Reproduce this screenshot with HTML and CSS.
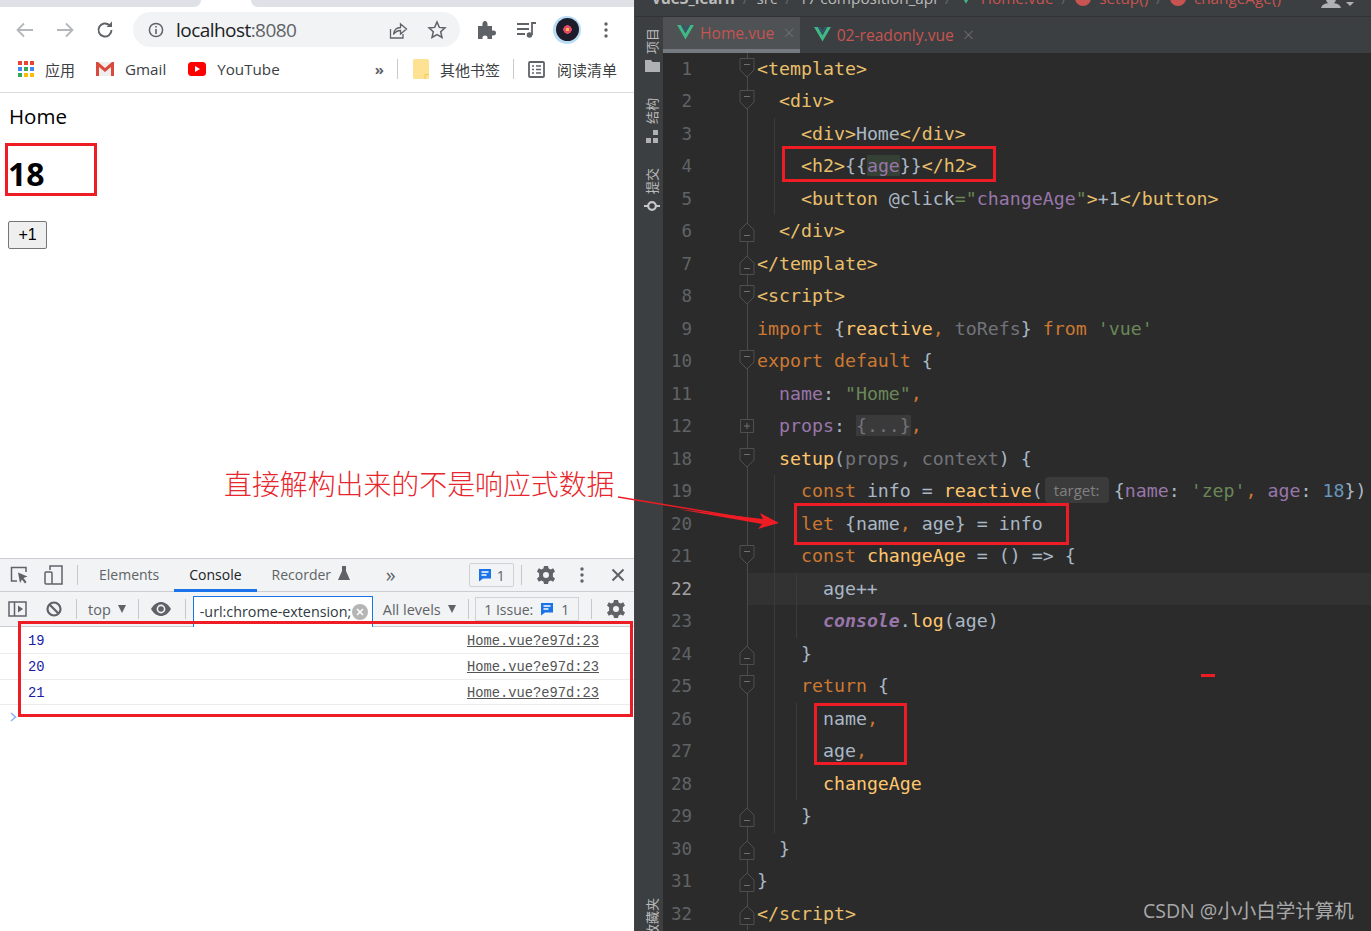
FILE: index.html
```html
<!DOCTYPE html>
<html lang="en">
<head>
    <meta charset="UTF-8">
    <title>Home</title>
    <link rel="stylesheet" href="styles.css">
</head>
<body>
    <svg class="defs" width="0" height="0">
        <symbol id="fold-open" viewBox="0 0 16 24"><path d="M1 1.5H15V13L8 20L1 13Z" fill="#2b2b2b" stroke="#4f4f4f"/><path d="M5 7.5H11" stroke="#707070"/></symbol>
        <symbol id="fold-close" viewBox="0 0 16 24"><path d="M1 22.5H15V11L8 4L1 11Z" fill="#2b2b2b" stroke="#4f4f4f"/><path d="M5 16.5H11" stroke="#707070"/></symbol>
        <symbol id="fold-plus" viewBox="0 0 16 24"><path d="M1.5 5.5H14.5V18.5H1.5Z" fill="#2b2b2b" stroke="#4f4f4f"/><path d="M5 12H11M8 9V15" stroke="#707070"/></symbol>
        <symbol id="vue" viewBox="0 0 18 16"><path d="M0 0H4L9 9L14 0H18L9 15.5Z" fill="#41b883"/><path d="M4 0H7L9 4L11 0H14L9 8.5Z" fill="#35566a"/></symbol>
        <symbol id="msg" viewBox="0 0 14 14"><path d="M1 1H13V10.5H5L1 13.5Z" fill="#1a73e8"/><path d="M3.5 4H10.5M3.5 7H8.5" stroke="#fff" stroke-width="1.3"/></symbol>
        <symbol id="gear" viewBox="0 0 20 20"><path d="M8 1H12L12.6 3.6L14.8 4.6L17.2 3.2L19 6.6L16.9 8.3V11.7L19 13.4L17.2 16.8L14.8 15.4L12.6 16.4L12 19H8L7.4 16.4L5.2 15.4L2.8 16.8L1 13.4L3.1 11.7V8.3L1 6.6L2.8 3.2L5.2 4.6L7.4 3.6Z" fill="#5f6368"/><circle cx="10" cy="10" r="3" fill="#f1f3f4"/></symbol>
    </svg>

    <div class="screen">
        <!-- left: chrome window -->
        <div class="browser">
            <div class="tabstrip"><div class="tab-left"></div><div class="tab-right"></div></div>
            <div class="toolbar">
                <svg class="tb-icon" width="20" height="20" viewBox="0 0 20 20"><path d="M18 10H3M9 3.5L2.5 10L9 16.5" fill="none" stroke="#b4b7bb" stroke-width="1.8"/></svg>
                <svg class="tb-icon" width="20" height="20" viewBox="0 0 20 20"><path d="M2 10H17M11 3.5L17.5 10L11 16.5" fill="none" stroke="#b4b7bb" stroke-width="1.8"/></svg>
                <svg class="tb-icon" width="20" height="20" viewBox="0 0 20 20"><path d="M16.5 10A6.5 6.5 0 1 1 14.5 5.3" fill="none" stroke="#5f6368" stroke-width="1.9"/><path d="M11.5 7H17V1.5Z" fill="#5f6368"/></svg>
                <div class="omnibox">
                    <svg width="16" height="16" viewBox="0 0 16 16"><circle cx="8" cy="8" r="6.6" fill="none" stroke="#5f6368" stroke-width="1.5"/><path d="M8 7V12M8 4V5.6" stroke="#5f6368" stroke-width="1.6"/></svg>
                    <span class="url">localhost<span class="url-dim">:8080</span></span>
                    <svg class="share" width="20" height="20" viewBox="0 0 20 20"><path d="M2.5 9V18H15V14" fill="none" stroke="#5f6368" stroke-width="1.3"/><path d="M5.5 14.5C6 10 9 7.5 12.5 7.5V4L18.5 9L12.5 14V10.5C10 10.5 7.5 11.5 5.5 14.5Z" fill="none" stroke="#5f6368" stroke-width="1.3"/></svg>
                    <svg width="20" height="20" viewBox="0 0 20 20"><path d="M10 2L12.3 7.4L18 7.9L13.7 11.7L15 17.5L10 14.5L5 17.5L6.3 11.7L2 7.9L7.7 7.4Z" fill="none" stroke="#5f6368" stroke-width="1.5"/></svg>
                </div>
                <svg class="puzzle" width="20" height="20" viewBox="0 0 20 20"><path d="M2 6H6.5C6 2.5 7.5 1 9 1S12 2.5 11.5 6H16V10.5C19.5 10 20 11.5 20 13S19 16 16 15.5V19H11.5C12 16.5 10.5 15.5 9 15.5S6 16.5 6.5 19H2Z" fill="#5f6368"/></svg>
                <svg class="queue" width="20" height="18" viewBox="0 0 20 18"><path d="M0 3H12M0 8H12M0 13H8" stroke="#5f6368" stroke-width="1.8"/><path d="M15 14V2H19" fill="none" stroke="#5f6368" stroke-width="1.8"/><circle cx="12.5" cy="14" r="2.8" fill="#5f6368"/></svg>
                <div class="avatar"><div class="avatar-disc"></div></div>
                <svg class="menu" width="4" height="16" viewBox="0 0 4 16"><circle cx="2" cy="2" r="1.7" fill="#5f6368"/><circle cx="2" cy="8" r="1.7" fill="#5f6368"/><circle cx="2" cy="14" r="1.7" fill="#5f6368"/></svg>
            </div>
            <div class="bookmarks">
                <div class="bm bm-apps">
                    <svg width="16" height="16" viewBox="0 0 16 16"><path d="M0 0H4V4H0Z" fill="#ea4335"/><path d="M6 0H10V4H6Z" fill="#ea4335"/><path d="M12 0H16V4H12Z" fill="#ea4335"/><path d="M0 6H4V10H0Z" fill="#4285f4"/><path d="M6 6H10V10H6Z" fill="#34a853"/><path d="M12 6H16V10H12Z" fill="#4285f4"/><path d="M0 12H4V16H0Z" fill="#34a853"/><path d="M6 12H10V16H6Z" fill="#fbbc05"/><path d="M12 12H16V16H12Z" fill="#fbbc05"/></svg>
                    <span>应用</span>
                </div>
                <div class="bm bm-gmail">
                    <svg width="18" height="14" viewBox="0 0 18 14"><path d="M0 0H18V14H0Z" fill="#eee"/><path d="M0 14V0H2L9 6L16 0H18V14H15V5L9 10L3 5V14Z" fill="#d9493c"/></svg>
                    <span>Gmail</span>
                </div>
                <div class="bm bm-yt">
                    <svg width="18" height="14" viewBox="0 0 18 14"><rect width="18" height="14" rx="3.5" fill="#f00"/><path d="M7 4L12 7L7 10Z" fill="#fff"/></svg>
                    <span>YouTube</span>
                </div>
                <span class="bm-more">»</span>
                <div class="bm-sep"></div>
                <div class="bm bm-other">
                    <svg width="16" height="20" viewBox="0 0 16 20"><path d="M1.5 0H14.5Q16 0 16 1.5V18.5Q16 20 14.5 20H1.5Q0 20 0 18.5V1.5Q0 0 1.5 0Z" fill="#fde293"/><path d="M12 20V15.5H16" fill="none" stroke="#f1c94f"/></svg>
                    <span>其他书签</span>
                </div>
                <div class="bm-sep"></div>
                <div class="bm bm-read">
                    <svg width="17" height="17" viewBox="0 0 17 17"><rect x="1" y="1" width="15" height="15" rx="1" fill="none" stroke="#5f6368" stroke-width="1.8"/><path d="M4 5H6M8 5H13M4 8.5H6M8 8.5H13M4 12H6M8 12H13" stroke="#5f6368" stroke-width="1.3"/></svg>
                    <span>阅读清单</span>
                </div>
            </div>
            <div class="page">
                <div class="page-home">Home</div>
                <h2 class="page-age">18</h2>
                <button class="page-btn">+1</button>
            </div>
            <div class="devtools">
                <div class="dt-tabs">
                    <svg class="dt-inspect" width="19" height="18" viewBox="0 0 19 18"><path d="M7 15H1.5V1.5H16V6" fill="none" stroke="#5f6368" stroke-width="1.5"/><path d="M8 6.5L17.5 10.5L13.5 12L16.5 16L15 17.5L12 13.5L10 17Z" fill="#5f6368"/></svg>
                    <svg class="dt-device" width="19" height="20" viewBox="0 0 19 20"><path d="M6 5V1H18V19H8" fill="none" stroke="#5f6368" stroke-width="1.5"/><rect x="1" y="7" width="7" height="12" rx="1" fill="none" stroke="#5f6368" stroke-width="1.5"/></svg>
                    <div class="dt-sep dt-sep-a"></div>
                    <div class="dt-tab">Elements</div>
                    <div class="dt-tab dt-tab-on">Console</div>
                    <div class="dt-tab dt-tab-rec">Recorder
                        <svg width="12" height="14" viewBox="0 0 12 14"><path d="M4 0H8V5L12 14H0L4 5Z" fill="#5f6368"/></svg>
                    </div>
                    <span class="dt-more">»</span>
                    <div class="dt-badge"><svg width="14" height="14"><use href="#msg"/></svg><span>1</span></div>
                    <div class="dt-sep dt-sep-b"></div>
                    <svg class="dt-gear" width="20" height="20"><use href="#gear"/></svg>
                    <svg class="dt-dots" width="4" height="16" viewBox="0 0 4 16"><circle cx="2" cy="2" r="1.7" fill="#5f6368"/><circle cx="2" cy="8" r="1.7" fill="#5f6368"/><circle cx="2" cy="14" r="1.7" fill="#5f6368"/></svg>
                    <svg class="dt-x" width="14" height="14" viewBox="0 0 14 14"><path d="M1.5 1.5L12.5 12.5M12.5 1.5L1.5 12.5" stroke="#5f6368" stroke-width="2"/></svg>
                </div>
                <div class="dt-filter">
                    <svg class="f-panel" width="19" height="16" viewBox="0 0 19 16"><rect x="1" y="1" width="17" height="14" fill="none" stroke="#5f6368" stroke-width="1.5"/><path d="M6.5 1V15" stroke="#5f6368" stroke-width="1.5"/><path d="M10 4.5L15 8L10 11.5Z" fill="#5f6368"/></svg>
                    <svg class="f-block" width="16" height="16" viewBox="0 0 16 16"><circle cx="8" cy="8" r="6.5" fill="none" stroke="#5f6368" stroke-width="2.2"/><path d="M3.5 3.5L12.5 12.5" stroke="#5f6368" stroke-width="2.2"/></svg>
                    <div class="dt-sep f-sep-a"></div>
                    <span class="f-top">top</span><span class="f-caret f-caret-top"></span>
                    <div class="dt-sep f-sep-b"></div>
                    <svg class="f-eye" width="20" height="14" viewBox="0 0 20 14"><path d="M0 7C3 2 6.5 0 10 0S17 2 20 7C17 12 13.5 14 10 14S3 12 0 7Z" fill="#5f6368"/><circle cx="10" cy="7" r="4.4" fill="#f1f3f4"/><circle cx="10" cy="7" r="2.8" fill="#5f6368"/></svg>
                    <div class="dt-sep f-sep-c"></div>
                    <div class="f-input">
                        <span>-url:chrome-extension;</span>
                        <svg width="16" height="16" viewBox="0 0 16 16"><circle cx="8" cy="8" r="8" fill="#b5b5b5"/><path d="M5 5L11 11M11 5L5 11" stroke="#fff" stroke-width="1.5"/></svg>
                    </div>
                    <span class="f-levels">All levels</span><span class="f-caret"></span>
                    <div class="dt-sep f-sep-d"></div>
                    <div class="f-issue"><span>1 Issue:</span><svg width="14" height="14"><use href="#msg"/></svg><span>1</span></div>
                    <div class="dt-sep f-sep-e"></div>
                    <svg class="f-gear" width="20" height="20"><use href="#gear"/></svg>
                </div>
                <div class="log-row log-first"><span class="log-val">19</span><a class="log-src">Home.vue?e97d:23</a></div>
                <div class="log-row"><span class="log-val">20</span><a class="log-src">Home.vue?e97d:23</a></div>
                <div class="log-row"><span class="log-val">21</span><a class="log-src">Home.vue?e97d:23</a></div>
                <svg class="prompt" width="7" height="10" viewBox="0 0 7 10"><path d="M1 1L5.5 5L1 9" fill="none" stroke="#8ab4f8" stroke-width="1.6"/></svg>
            </div>
        </div>

        <!-- right: ide window -->
        <div class="ide">
            <div class="crumbs">
                <div class="crumbs-inner">
                    <b>vue3_learn</b><i>/</i><span>src</span><i>/</i><span>17 composition_api</span><i>/</i>
                    <svg width="14" height="12"><use href="#vue"/></svg><span class="crumb-red">Home.vue</span><i>/</i>
                    <span class="crumb-dot"></span><span class="crumb-red">setup()</span><i>/</i>
                    <span class="crumb-dot"></span><span class="crumb-red">changeAge()</span>
                </div>
                <svg class="crumb-user" width="34" height="8" viewBox="0 0 34 8"><circle cx="10" cy="-1" r="5" fill="#afb1b3"/><path d="M0 8C1 4 5 3 10 3S19 4 20 8Z" fill="#afb1b3"/><path d="M25 2L29 6L33 2Z" fill="#afb1b3"/></svg>
            </div>
            <div class="ide-main">
                <div class="side">
                    <span class="side-label side-project">项目</span>
                    <svg class="side-icon" width="15" height="12" viewBox="0 0 15 12"><path d="M0 0H6L7.5 2H15V12H0Z" fill="#afb1b3"/></svg>
                    <span class="side-label side-structure">结构</span>
                    <svg class="side-icon" width="14" height="13" viewBox="0 0 14 13"><path d="M8 0H13V5H8ZM1 8H6V13H1ZM8 8H13V13H8Z" fill="#afb1b3"/></svg>
                    <span class="side-label side-commit">提交</span>
                    <svg class="side-icon" width="16" height="12" viewBox="0 0 16 12"><circle cx="8" cy="6" r="3.8" fill="none" stroke="#c5c7c9" stroke-width="2.2"/><path d="M0 6H4M12 6H16" stroke="#c5c7c9" stroke-width="2.2"/></svg>
                    <span class="side-label side-fav">收藏夹</span>
                </div>
                <div class="editor">
                    <div class="file-tabs">
                        <div class="file-tab file-tab-on"><svg width="17" height="15"><use href="#vue"/></svg><span>Home.vue</span><em>×</em></div>
                        <div class="file-tab"><svg width="17" height="15"><use href="#vue"/></svg><span>02-readonly.vue</span><em>×</em></div>
                    </div>
                    <div class="code">
                        <div class="row"><span class="ln">1</span><span class="fold"><svg><use href="#fold-open"/></svg></span><span class="src"><span class="t">&lt;template&gt;</span></span></div>
                        <div class="row"><span class="ln">2</span><span class="fold"><svg><use href="#fold-open"/></svg></span><span class="src">  <span class="t">&lt;div&gt;</span></span></div>
                        <div class="row"><span class="ln">3</span><span class="fold"></span><span class="src g1">    <span class="t">&lt;div&gt;</span>Home<span class="t">&lt;/div&gt;</span></span></div>
                        <div class="row"><span class="ln">4</span><span class="fold"></span><span class="src g1">    <span class="t">&lt;h2&gt;</span>{{<span class="v hl">age</span>}}<span class="t">&lt;/h2&gt;</span></span></div>
                        <div class="row"><span class="ln">5</span><span class="fold"></span><span class="src g1">    <span class="t">&lt;button</span> @click<span class="s">=</span><span class="s">"</span><span class="v">changeAge</span><span class="s">"</span><span class="t">&gt;</span>+1<span class="t">&lt;/button&gt;</span></span></div>
                        <div class="row"><span class="ln">6</span><span class="fold"><svg><use href="#fold-close"/></svg></span><span class="src">  <span class="t">&lt;/div&gt;</span></span></div>
                        <div class="row"><span class="ln">7</span><span class="fold"><svg><use href="#fold-close"/></svg></span><span class="src"><span class="t">&lt;/template&gt;</span></span></div>
                        <div class="row"><span class="ln">8</span><span class="fold"><svg><use href="#fold-open"/></svg></span><span class="src"><span class="t">&lt;script&gt;</span></span></div>
                        <div class="row"><span class="ln">9</span><span class="fold"></span><span class="src"><span class="k">import</span> {<span class="f">reactive</span><span class="k">,</span> <span class="p">toRefs</span>} <span class="k">from</span> <span class="s">'vue'</span></span></div>
                        <div class="row"><span class="ln">10</span><span class="fold"><svg><use href="#fold-open"/></svg></span><span class="src"><span class="k">export default</span> {</span></div>
                        <div class="row"><span class="ln">11</span><span class="fold"></span><span class="src">  <span class="v">name</span>: <span class="s">"Home"</span><span class="k">,</span></span></div>
                        <div class="row"><span class="ln">12</span><span class="fold"><svg><use href="#fold-plus"/></svg></span><span class="src">  <span class="v">props</span>: <span class="folded">{...}</span><span class="k">,</span></span></div>
                        <div class="row"><span class="ln">18</span><span class="fold"><svg><use href="#fold-open"/></svg></span><span class="src">  <span class="f">setup</span>(<span class="p">props, context</span>) {</span></div>
                        <div class="row"><span class="ln">19</span><span class="fold"></span><span class="src g1">    <span class="k">const</span> info = <span class="f">reactive</span>(<span class="inlay">target:</span>{<span class="v">name</span>: <span class="s">'zep'</span><span class="k">,</span> <span class="v">age</span>: <span class="n">18</span>})</span></div>
                        <div class="row"><span class="ln">20</span><span class="fold"></span><span class="src g1">    <span class="k">let</span> {name<span class="k">,</span> age} = info</span></div>
                        <div class="row"><span class="ln">21</span><span class="fold"><svg><use href="#fold-open"/></svg></span><span class="src g1">    <span class="k">const</span> <span class="f">changeAge</span> = () =&gt; {</span></div>
                        <div class="row row-current"><span class="ln">22</span><span class="fold"></span><span class="src g2">      age++</span></div>
                        <div class="row"><span class="ln">23</span><span class="fold"></span><span class="src g2">      <span class="v console">console</span>.<span class="f">log</span>(age)</span></div>
                        <div class="row"><span class="ln">24</span><span class="fold"><svg><use href="#fold-close"/></svg></span><span class="src g1">    }</span></div>
                        <div class="row"><span class="ln">25</span><span class="fold"><svg><use href="#fold-open"/></svg></span><span class="src g1">    <span class="k">return</span> {</span></div>
                        <div class="row"><span class="ln">26</span><span class="fold"></span><span class="src g2">      name<span class="k">,</span></span></div>
                        <div class="row"><span class="ln">27</span><span class="fold"></span><span class="src g2">      age<span class="k">,</span></span></div>
                        <div class="row"><span class="ln">28</span><span class="fold"></span><span class="src g2">      <span class="f">changeAge</span></span></div>
                        <div class="row"><span class="ln">29</span><span class="fold"><svg><use href="#fold-close"/></svg></span><span class="src g1">    }</span></div>
                        <div class="row"><span class="ln">30</span><span class="fold"><svg><use href="#fold-close"/></svg></span><span class="src">  }</span></div>
                        <div class="row"><span class="ln">31</span><span class="fold"><svg><use href="#fold-close"/></svg></span><span class="src">}</span></div>
                        <div class="row"><span class="ln">32</span><span class="fold"><svg><use href="#fold-close"/></svg></span><span class="src"><span class="t">&lt;/script&gt;</span></span></div>
                    </div>
                </div>
            </div>
        </div>

        <!-- annotations drawn on top of the screenshot -->
        <div class="mark mark-age"></div>
        <div class="mark mark-console"></div>
        <div class="mark mark-h2"></div>
        <div class="mark mark-let"></div>
        <div class="mark mark-return"></div>
        <div class="mark-dash"></div>
        <div class="note">直接解构出来的不是响应式数据</div>
        <svg class="arrow" width="170" height="36" viewBox="0 0 170 36"><path d="M1 1L146 25" stroke="#ee1c25" stroke-width="1.4"/><path d="M60 13L146 23L143 17L162 27L141 33L145 28Z" fill="#ee1c25"/></svg>
        <div class="watermark">CSDN @小小白学计算机</div>
    </div>
</body>
</html>
```

FILE: styles.css
```css
* {
    box-sizing: border-box;
}
html, body {
    margin: 0;
    height: 931px;
    overflow: hidden;
}
.defs {
    position: absolute;
}
.screen {
    position: relative;
    display: flex;
    width: 1371px;
    height: 931px;
    font-family: "Open Sans", "Noto Sans CJK SC", sans-serif;
}

/* browser */
.browser {
    width: 635px;
    height: 931px;
    display: flex;
    flex-direction: column;
    background-color: #fff;
    border-right: 1px solid #444;
    flex-shrink: 0;
}
.tabstrip {
    height: 7px;
    display: flex;
    justify-content: space-between;
    flex-shrink: 0;
}
.tab-left {
    width: 201px;
    background-color: #dee1e6;
    border-radius: 0 0 7px 0;
}
.tab-right {
    width: 383px;
    background-color: #dee1e6;
    border-radius: 0 0 0 7px;
}
.toolbar {
    height: 45px;
    display: flex;
    align-items: center;
    flex-shrink: 0;
}
.tb-icon {
    margin-left: 15px;
    margin-right: -4px;
}
.tb-icon + .tb-icon {
    margin-left: 24px;
}
.omnibox {
    width: 327px;
    height: 35px;
    margin-left: 22px;
    padding: 0 13px 0 15px;
    border-radius: 18px;
    background-color: #f1f3f4;
    display: flex;
    align-items: center;
}
.url {
    margin-left: 12px;
    font-size: 19px;
    letter-spacing: -0.55px;
    color: #202124;
    flex: 1;
}
.url-dim {
    color: #5f6368;
}
.share {
    margin-right: 19px;
}
.puzzle {
    margin-left: 16px;
}
.queue {
    margin-left: 21px;
}
.avatar {
    width: 28px;
    height: 28px;
    margin-left: 16px;
    border-radius: 50%;
    background-color: #b9dcf5;
    display: flex;
    align-items: center;
    justify-content: center;
}
.avatar-disc {
    width: 23px;
    height: 23px;
    border-radius: 50%;
    background: radial-gradient(circle, #f5c04a 0 1.5px, #e8476a 2px 4px, #1c1c2a 4.5px 100%);
}
.menu {
    margin-left: 23px;
}
.bookmarks {
    height: 41px;
    padding: 0 0 6px 18px;
    display: flex;
    align-items: center;
    border-bottom: 1px solid #dadce0;
    flex-shrink: 0;
    font-size: 15.2px;
    color: #3c4043;
}
.bm {
    display: flex;
    align-items: center;
    gap: 11px;
}
.bm-apps span, .bm-other span, .bm-read span {
    font-size: 15px;
}
.bm-gmail {
    margin-left: 21px;
}
.bm-yt {
    margin-left: 22px;
}
.bm-more {
    margin-left: auto;
    margin-right: 13px;
    font-size: 15px;
    color: #5f6368;
    font-weight: bold;
}
.bm-sep {
    width: 1px;
    height: 20px;
    background-color: #c8cacd;
}
.bm-other {
    margin: 0 13px 0 15px;
}
.bm-read {
    margin: 0 17px 0 14px;
    gap: 12px;
}
.page {
    flex: 1;
    padding: 9px 0 0 8px;
    color: #000;
}
.page-home {
    height: 28px;
    margin-left: 1px;
    font-size: 20.5px;
    line-height: 28px;
}
.page-age {
    margin: 26px 0 29px 0;
    height: 36px;
    font-size: 32px;
    line-height: 36px;
    font-weight: bold;
}
.page-btn {
    display: block;
    width: 39px;
    height: 28px;
    padding: 0;
    font-family: "Liberation Sans", sans-serif;
    font-size: 16px;
    background-color: #efefef;
    border: 1px solid #767676;
    border-radius: 2px;
}

/* devtools */
.devtools {
    height: 373px;
    flex-shrink: 0;
    border-top: 1px solid #cbcdd0;
    position: relative;
}
.dt-tabs {
    height: 33px;
    display: flex;
    align-items: center;
    background-color: #f1f3f4;
    border-bottom: 1px solid #cbcdd0;
    font-size: 14px;
    color: #5f6368;
}
.dt-inspect {
    margin-left: 10px;
}
.dt-device {
    margin-left: 15px;
}
.dt-sep {
    width: 1px;
    height: 20px;
    background-color: #c6c8cb;
    flex-shrink: 0;
}
.dt-sep-a {
    margin-left: 14px;
}
.dt-tab {
    height: 33px;
    padding: 0 15px;
    line-height: 32px;
}
.dt-sep-a + .dt-tab {
    margin-left: 6px;
}
.dt-tab-on {
    color: #202124;
    border-bottom: 3px solid #1a73e8;
}
.dt-tab-rec svg {
    margin-left: 3px;
}
.dt-more {
    margin-left: 21px;
    font-size: 20px;
    line-height: 24px;
    color: #5f6368;
}
.dt-badge {
    width: 45px;
    height: 24px;
    margin-left: 73px;
    display: flex;
    align-items: center;
    justify-content: center;
    gap: 5px;
    border: 1px solid #cfd1d4;
    border-radius: 2px;
}
.dt-sep-b {
    margin-left: 7px;
}
.dt-gear {
    margin-left: 14px;
}
.dt-dots {
    margin-left: 24px;
}
.dt-x {
    margin-left: 27px;
}
.dt-filter {
    height: 35px;
    display: flex;
    align-items: center;
    background-color: #f1f3f4;
    border-bottom: 1px solid #cbcdd0;
    font-size: 14.5px;
    color: #5f6368;
}
.f-panel {
    margin-left: 8px;
}
.f-block {
    margin-left: 19px;
}
.f-sep-a {
    margin-left: 14px;
}
.f-top {
    margin-left: 11px;
}
.f-caret {
    width: 0;
    height: 0;
    margin-left: 7px;
    border-left: 4.5px solid transparent;
    border-right: 4.5px solid transparent;
    border-top: 8px solid #5f6368;
}
.f-sep-b {
    margin-left: 12px;
}
.f-eye {
    margin-left: 12px;
}
.f-sep-c {
    margin-left: 14px;
}
.f-input {
    width: 180px;
    height: 31px;
    margin: 4px 0 0 7px;
    padding: 0 4px 0 6px;
    display: flex;
    align-items: center;
    justify-content: space-between;
    background-color: #fff;
    border: 1px solid #1a73e8;
    border-bottom: none;
    color: #303942;
    font-size: 14.3px;
    white-space: nowrap;
    overflow: hidden;
}
.f-levels {
    margin-left: 10px;
}
.f-sep-d {
    margin-left: 12px;
}
.f-issue {
    width: 104px;
    height: 24px;
    margin-left: 6px;
    display: flex;
    align-items: center;
    justify-content: center;
    gap: 7px;
    border: 1px solid #cfd1d4;
    font-size: 14px;
}
.f-sep-e {
    margin-left: 12px;
}
.f-gear {
    margin-left: 14px;
}
.log-row {
    height: 25.5px;
    padding: 3px 35px 0 28px;
    display: flex;
    align-items: center;
    justify-content: space-between;
    border-bottom: 1px solid #ececec;
    font-family: "Liberation Mono", monospace;
    font-size: 13.75px;
}
.log-first {
    height: 27px;
}
.log-val {
    color: #1a1aa6;
}
.log-src {
    color: #545454;
    text-decoration: underline;
}
.prompt {
    display: block;
    margin: 7px 0 0 10px;
}

/* ide */
.ide {
    flex: 1;
    min-width: 0;
    display: flex;
    flex-direction: column;
    background-color: #2b2b2b;
}
.crumbs {
    height: 17px;
    display: flex;
    justify-content: space-between;
    background-color: #3c3f41;
    border-bottom: 1px solid #323232;
    overflow: hidden;
    flex-shrink: 0;
}
.crumbs-inner {
    height: 24px;
    margin: -14px 0 0 17px;
    display: flex;
    align-items: center;
    gap: 8px;
    font-size: 15.3px;
    color: #bbb;
    white-space: nowrap;
}
.crumbs-inner i {
    color: #666;
    font-style: normal;
}
.crumb-red {
    color: #c75450;
}
.crumb-dot {
    width: 16px;
    height: 16px;
    border-radius: 50%;
    background-color: #c75450;
}
.crumb-user {
    margin-right: 16px;
}
.ide-main {
    flex: 1;
    display: flex;
    min-height: 0;
}
.side {
    width: 28px;
    padding-left: 6px;
    background-color: #3c3f41;
    display: flex;
    flex-direction: column;
    align-items: center;
    flex-shrink: 0;
    overflow: hidden;
}
.side-label {
    writing-mode: vertical-rl;
    text-orientation: sideways;
    transform: rotate(180deg);
    font-family: "Noto Sans CJK SC", sans-serif;
    font-size: 13px;
    line-height: 16px;
    color: #bbb;
    flex-shrink: 0;
}
.side-icon {
    margin-top: 6px;
    flex-shrink: 0;
}
.side-project {
    margin-top: 11px;
}
.side-structure {
    margin-top: 26px;
}
.side-commit {
    margin-top: 25px;
}
.side-fav {
    margin-top: auto;
    margin-bottom: -6px;
}
.editor {
    flex: 1;
    min-width: 0;
    display: flex;
    flex-direction: column;
}
.file-tabs {
    height: 35.5px;
    display: flex;
    background-color: #3c3f41;
    flex-shrink: 0;
}
.file-tab {
    height: 35.5px;
    padding: 0 10px 0 14px;
    display: flex;
    align-items: center;
    gap: 6px;
    font-family: "Open Sans", sans-serif;
    font-size: 15.6px;
    color: #c75450;
}
.file-tab em {
    margin-left: 3px;
    font-style: normal;
    font-size: 20px;
    font-weight: 300;
    color: #6e7072;
}
.file-tab-on {
    background-color: #4e5254;
    border-bottom: 4px solid #747a80;
    padding-right: 5px;
}

/* code */
.code {
    flex: 1;
    font-family: "DejaVu Sans Mono", monospace;
    font-size: 18.25px;
    color: #a9b7c6;
}
.row {
    display: flex;
    height: 32.5px;
    line-height: 32.5px;
    white-space: pre;
}
.ln {
    width: 29px;
    text-align: right;
    color: #606366;
    flex-shrink: 0;
    font-size: 17.5px;
}
.fold {
    width: 65px;
    flex-shrink: 0;
    display: flex;
    align-items: center;
    padding-left: 48px;
    background: linear-gradient(#4a4a4a, #4a4a4a) 55px 0 / 1px 100% no-repeat;
}
.fold svg {
    width: 16px;
    height: 24px;
    margin-left: -1px;
}
.src {
    flex: 1;
    min-width: 0;
}
.g1 {
    background: linear-gradient(#3b3b3b, #3b3b3b) 17px 0 / 1px 100% no-repeat;
}
.g2 {
    background:
        linear-gradient(#3b3b3b, #3b3b3b) 17px 0 / 1px 100% no-repeat,
        linear-gradient(#3b3b3b, #3b3b3b) 39px 0 / 1px 100% no-repeat;
}
.row-current .ln {
    color: #a4a3a3;
}
.row-current .fold {
    background:
        linear-gradient(#4a4a4a, #4a4a4a) 55px 0 / 1px 100% no-repeat,
        linear-gradient(#323232, #323232) 56px 0 / 9px 100% no-repeat;
}
.row-current .src {
    background:
        linear-gradient(#3b3b3b, #3b3b3b) 17px 0 / 1px 100% no-repeat,
        linear-gradient(#3b3b3b, #3b3b3b) 39px 0 / 1px 100% no-repeat,
        #323232;
}
.t { color: #e8bf6a; }
.k { color: #cc7832; }
.v { color: #9876aa; }
.s { color: #6a8759; }
.n { color: #6897bb; }
.f { color: #ffc66d; }
.p { color: #72737a; }
.console {
    font-style: italic;
    font-weight: bold;
}
.hl {
    background-color: #344134;
}
.folded {
    background-color: #3a3a3a;
    color: #72737a;
}
.inlay {
    display: inline-block;
    width: 64px;
    height: 26px;
    margin: 0 5px 0 2px;
    border-radius: 4px;
    background-color: #3b3b3b;
    color: #808080;
    font-family: "Open Sans", sans-serif;
    font-size: 15px;
    line-height: 26px;
    text-align: center;
    vertical-align: 1px;
}

/* annotations */
.mark {
    position: absolute;
    border: 3px solid #ee1c25;
}
.mark-age { left: 5px; top: 143px; width: 92px; height: 53px; }
.mark-console { left: 18px; top: 621px; width: 615px; height: 96px; }
.mark-h2 { left: 782px; top: 146px; width: 214px; height: 36px; }
.mark-let { left: 794px; top: 503px; width: 275px; height: 42px; }
.mark-return { left: 814px; top: 703px; width: 93px; height: 62px; }
.mark-dash {
    position: absolute;
    left: 1201px;
    top: 674px;
    width: 14px;
    height: 3px;
    background-color: #ee1c25;
}
.note {
    position: absolute;
    left: 224px;
    top: 463px;
    font-family: "Noto Sans CJK SC", sans-serif;
    font-size: 27.9px;
    font-weight: 300;
    line-height: 40px;
    color: #e8262d;
    white-space: nowrap;
}
.arrow {
    position: absolute;
    left: 617px;
    top: 496px;
}
.watermark {
    position: absolute;
    left: 1143px;
    top: 897px;
    font-family: "Open Sans", "Noto Sans CJK SC", sans-serif;
    font-size: 19.5px;
    line-height: 28px;
    color: #a8a8a8;
    white-space: nowrap;
}
```
